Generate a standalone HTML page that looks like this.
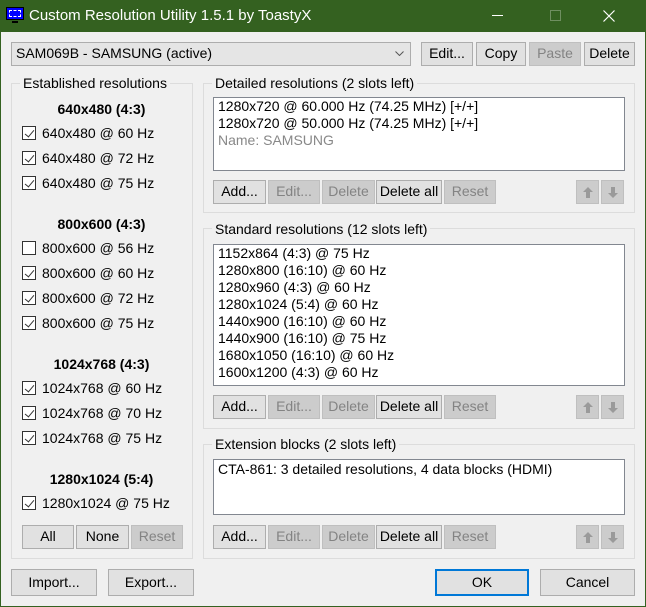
<!DOCTYPE html>
<html><head><style>
*{box-sizing:border-box;margin:0;padding:0}
body{width:646px;height:607px;background:#f0f0f0;font-family:"Liberation Sans",Arial,sans-serif;font-size:14px;color:#000;position:relative;overflow:hidden}
.a{position:absolute;white-space:nowrap}
.win{position:absolute;left:0;top:0;width:646px;height:607px;border:1px solid #346120;border-top:none}
.title{position:absolute;left:0;top:0;width:646px;height:32px;background:#346120;color:#fff;font-size:15px}
.btn{position:absolute;background:#e1e1e1;border:1px solid #adadad;text-align:center;line-height:21px;font-size:14px}
.dis{background:#cccccc;border-color:#bfbfbf;color:#838383}
.grp{position:absolute;border:1px solid #dcdcdc}
.lbl{position:absolute;background:#f0f0f0;padding:0 3px;font-size:14px;line-height:15px}
.list{position:absolute;background:#fff;border:1px solid #828790;padding:0 4px;line-height:17px;font-size:14px}
.cb{position:absolute;width:14px;height:14px;border:1px solid #333;background:#fff}
.cb.c::after{content:"";position:absolute;left:4px;top:1px;width:4px;height:8px;border:solid #333;border-width:0 1px 1px 0;transform:rotate(40deg)}
.h{position:absolute;font-weight:bold;text-align:center;width:181px;left:11px;font-size:14px}
.ar{position:absolute;width:23px;height:24px;background:#cccccc;border:1px solid #bfbfbf}
.ar svg{position:absolute;left:5px;top:5px}
</style></head><body>
<div class="win"></div>
<div class="title">
 <div class="a" style="left:6px;top:7px;width:18px;height:13px;background:#00f;border:1px solid #000"></div>
 <div class="a" style="left:9px;top:10px;width:12px;height:7px;border:1px dashed #fff"></div>
 <div class="a" style="left:12px;top:21px;width:6px;height:2px;background:#000"></div>
 <div class="a" style="left:29px;top:7px">Custom Resolution Utility 1.5.1 by ToastyX</div>
 <div class="a" style="left:492px;top:15px;width:11px;height:1px;background:#fff"></div>
 <div class="a" style="left:550px;top:10px;width:11px;height:11px;border:1px solid #6f8f60"></div>
 <svg class="a" style="left:603px;top:10px" width="12" height="12"><path d="M0.5 0.5L11.5 11.5M11.5 0.5L0.5 11.5" stroke="#fff" stroke-width="1.2"/></svg>
</div>
<div class="a" style="left:11px;top:42px;width:400px;height:24px;background:#e5e5e5;border:1px solid #adadad;padding:2px 4px">SAM069B - SAMSUNG (active)</div>
<svg class="a" style="left:395px;top:51px" width="9" height="5"><path d="M0.5 0.5L4.5 4.5L8.5 0.5" stroke="#555" fill="none"/></svg>
<div class="btn" style="left:421px;top:42px;width:52px;height:24px">Edit...</div>
<div class="btn" style="left:476px;top:42px;width:50px;height:24px">Copy</div>
<div class="btn dis" style="left:529px;top:42px;width:52px;height:24px">Paste</div>
<div class="btn" style="left:584px;top:42px;width:51px;height:24px">Delete</div>

<div class="grp" style="left:11px;top:83px;width:182px;height:476px"></div>
<div class="lbl" style="left:20px;top:76px">Established resolutions</div>
<div class="h" style="top:101px">640x480 (4:3)</div>
<div class="cb c" style="left:22px;top:126px"></div><div class="a" style="left:42px;top:125px">640x480 @ 60 Hz</div>
<div class="cb c" style="left:22px;top:151px"></div><div class="a" style="left:42px;top:150px">640x480 @ 72 Hz</div>
<div class="cb c" style="left:22px;top:176px"></div><div class="a" style="left:42px;top:175px">640x480 @ 75 Hz</div>
<div class="h" style="top:216px">800x600 (4:3)</div>
<div class="cb" style="left:22px;top:241px"></div><div class="a" style="left:42px;top:240px">800x600 @ 56 Hz</div>
<div class="cb c" style="left:22px;top:266px"></div><div class="a" style="left:42px;top:265px">800x600 @ 60 Hz</div>
<div class="cb c" style="left:22px;top:291px"></div><div class="a" style="left:42px;top:290px">800x600 @ 72 Hz</div>
<div class="cb c" style="left:22px;top:316px"></div><div class="a" style="left:42px;top:315px">800x600 @ 75 Hz</div>
<div class="h" style="top:356px">1024x768 (4:3)</div>
<div class="cb c" style="left:22px;top:381px"></div><div class="a" style="left:42px;top:380px">1024x768 @ 60 Hz</div>
<div class="cb c" style="left:22px;top:406px"></div><div class="a" style="left:42px;top:405px">1024x768 @ 70 Hz</div>
<div class="cb c" style="left:22px;top:431px"></div><div class="a" style="left:42px;top:430px">1024x768 @ 75 Hz</div>
<div class="h" style="top:471px">1280x1024 (5:4)</div>
<div class="cb c" style="left:22px;top:496px"></div><div class="a" style="left:42px;top:495px">1280x1024 @ 75 Hz</div>
<div class="btn" style="left:22px;top:525px;width:52px;height:24px">All</div>
<div class="btn" style="left:76px;top:525px;width:53px;height:24px">None</div>
<div class="btn dis" style="left:131px;top:525px;width:52px;height:24px">Reset</div>

<!-- group 1 -->
<div class="grp" style="left:203px;top:83px;width:432px;height:130px"></div>
<div class="lbl" style="left:212px;top:76px">Detailed resolutions (2 slots left)</div>
<div class="list" style="left:213px;top:97px;width:412px;height:74px">1280x720 @ 60.000 Hz (74.25 MHz) [+/+]<br>1280x720 @ 50.000 Hz (74.25 MHz) [+/+]<br><span style="color:#888">Name: SAMSUNG</span></div>
<div class="btn" style="left:213px;top:180px;width:53px;height:24px">Add...</div>
<div class="btn dis" style="left:268px;top:180px;width:52px;height:24px">Edit...</div>
<div class="btn dis" style="left:322px;top:180px;width:53px;height:24px">Delete</div>
<div class="btn" style="left:376px;top:180px;width:66px;height:24px">Delete all</div>
<div class="btn dis" style="left:444px;top:180px;width:52px;height:24px">Reset</div>
<div class="ar" style="left:576px;top:180px"><svg width="12" height="13"><path d="M6 1L1 6H4V12H8V6H11Z" fill="#9a9a9a"/></svg></div>
<div class="ar" style="left:601px;top:180px"><svg width="12" height="13"><path d="M6 12L1 7H4V1H8V7H11Z" fill="#9a9a9a"/></svg></div>

<!-- group 2 -->
<div class="grp" style="left:203px;top:228px;width:432px;height:201px"></div>
<div class="lbl" style="left:212px;top:222px">Standard resolutions (12 slots left)</div>
<div class="list" style="left:213px;top:244px;width:412px;height:142px">1152x864 (4:3) @ 75 Hz<br>1280x800 (16:10) @ 60 Hz<br>1280x960 (4:3) @ 60 Hz<br>1280x1024 (5:4) @ 60 Hz<br>1440x900 (16:10) @ 60 Hz<br>1440x900 (16:10) @ 75 Hz<br>1680x1050 (16:10) @ 60 Hz<br>1600x1200 (4:3) @ 60 Hz</div>
<div class="btn" style="left:213px;top:395px;width:53px;height:24px">Add...</div>
<div class="btn dis" style="left:268px;top:395px;width:52px;height:24px">Edit...</div>
<div class="btn dis" style="left:322px;top:395px;width:53px;height:24px">Delete</div>
<div class="btn" style="left:376px;top:395px;width:66px;height:24px">Delete all</div>
<div class="btn dis" style="left:444px;top:395px;width:52px;height:24px">Reset</div>
<div class="ar" style="left:576px;top:395px"><svg width="12" height="13"><path d="M6 1L1 6H4V12H8V6H11Z" fill="#9a9a9a"/></svg></div>
<div class="ar" style="left:601px;top:395px"><svg width="12" height="13"><path d="M6 12L1 7H4V1H8V7H11Z" fill="#9a9a9a"/></svg></div>

<!-- group 3 -->
<div class="grp" style="left:203px;top:444px;width:432px;height:115px"></div>
<div class="lbl" style="left:212px;top:437px">Extension blocks (2 slots left)</div>
<div class="list" style="left:213px;top:459px;width:412px;height:56px;padding-top:1px">CTA-861: 3 detailed resolutions, 4 data blocks (HDMI)</div>
<div class="btn" style="left:213px;top:525px;width:53px;height:24px">Add...</div>
<div class="btn dis" style="left:268px;top:525px;width:52px;height:24px">Edit...</div>
<div class="btn dis" style="left:322px;top:525px;width:53px;height:24px">Delete</div>
<div class="btn" style="left:376px;top:525px;width:66px;height:24px">Delete all</div>
<div class="btn dis" style="left:444px;top:525px;width:52px;height:24px">Reset</div>
<div class="ar" style="left:576px;top:525px"><svg width="12" height="13"><path d="M6 1L1 6H4V12H8V6H11Z" fill="#9a9a9a"/></svg></div>
<div class="ar" style="left:601px;top:525px"><svg width="12" height="13"><path d="M6 12L1 7H4V1H8V7H11Z" fill="#9a9a9a"/></svg></div>

<div class="btn" style="left:11px;top:569px;width:86px;height:27px;line-height:24px">Import...</div>
<div class="btn" style="left:108px;top:569px;width:86px;height:27px;line-height:24px">Export...</div>
<div class="btn" style="left:435px;top:569px;width:94px;height:27px;line-height:23px;border:2px solid #0078d7">OK</div>
<div class="btn" style="left:540px;top:569px;width:95px;height:27px;line-height:24px">Cancel</div>
</body></html>
